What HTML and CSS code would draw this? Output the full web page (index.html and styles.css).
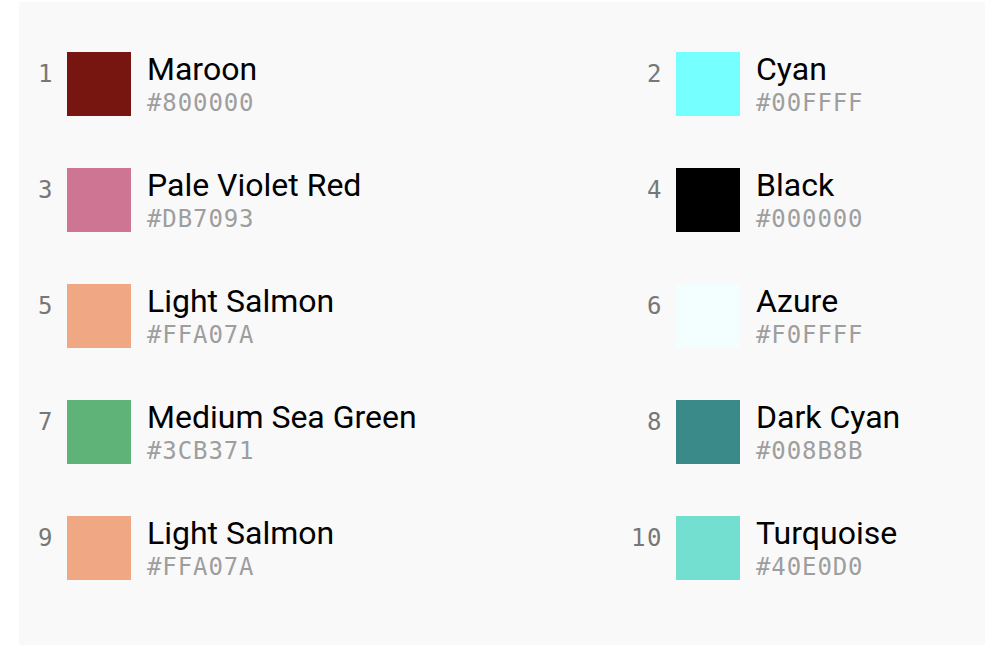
FILE: index.html
```html
<!DOCTYPE html>
<html>
<head>
<meta charset="utf-8">
<link rel="stylesheet" href="styles.css">
</head>
<body>
<div class="panel">
  <ul class="grid">
    <li class="item"><span class="num">1</span><span class="sw" style="background:#771510"></span><div class="info"><div class="name">Maroon</div><div class="hex">#800000</div></div></li>
    <li class="item"><span class="num">2</span><span class="sw" style="background:#75FFFF"></span><div class="info"><div class="name">Cyan</div><div class="hex">#00FFFF</div></div></li>
    <li class="item"><span class="num">3</span><span class="sw" style="background:#CE7593"></span><div class="info"><div class="name">Pale Violet Red</div><div class="hex">#DB7093</div></div></li>
    <li class="item"><span class="num">4</span><span class="sw" style="background:#000000"></span><div class="info"><div class="name">Black</div><div class="hex">#000000</div></div></li>
    <li class="item"><span class="num">5</span><span class="sw" style="background:#F0A784"></span><div class="info"><div class="name">Light Salmon</div><div class="hex">#FFA07A</div></div></li>
    <li class="item"><span class="num">6</span><span class="sw" style="background:#F3FFFF"></span><div class="info"><div class="name">Azure</div><div class="hex">#F0FFFF</div></div></li>
    <li class="item"><span class="num">7</span><span class="sw" style="background:#60B378"></span><div class="info"><div class="name">Medium Sea Green</div><div class="hex">#3CB371</div></div></li>
    <li class="item"><span class="num">8</span><span class="sw" style="background:#3A8A8A"></span><div class="info"><div class="name">Dark Cyan</div><div class="hex">#008B8B</div></div></li>
    <li class="item"><span class="num">9</span><span class="sw" style="background:#F0A784"></span><div class="info"><div class="name">Light Salmon</div><div class="hex">#FFA07A</div></div></li>
    <li class="item"><span class="num">10</span><span class="sw" style="background:#73DFD0"></span><div class="info"><div class="name">Turquoise</div><div class="hex">#40E0D0</div></div></li>
  </ul>
</div>
</body>
</html>
```
FILE: styles.css
```css
html, body {
  margin: 0;
  padding: 0;
  background: #ffffff;
  overflow: hidden;
}
body {
  padding: 2px 0 0 19px;
}
.panel {
  background: #f9f9f9;
  width: 980px;
  height: 643px;
  box-sizing: border-box;
  padding: 50px 0 0 0;
}
.grid {
  list-style: none;
  margin: 0;
  padding: 0;
  display: grid;
  grid-template-columns: 609px 1fr;
  row-gap: 52px;
}
.item {
  display: flex;
  align-items: flex-start;
  height: 64px;
}
.num {
  width: 35px;
  text-align: right;
  font-family: "DejaVu Sans Mono", monospace;
  font-size: 24px;
  letter-spacing: 1.5px;
  color: #777777;
  margin-right: 13px;
  line-height: 24px;
  padding-top: 10px;
}
.sw {
  width: 64px;
  height: 64px;
  flex: none;
}
.info {
  margin-left: 16px;
  display: flex;
  flex-direction: column;
}
.name {
  font-family: Roboto, sans-serif;
  font-size: 32px;
  line-height: 36px;
  margin-top: -1px;
  color: #000;
}
.hex {
  font-family: "DejaVu Sans Mono", monospace;
  font-size: 24px;
  letter-spacing: 0.9px;
  line-height: 28px;
  margin-top: 2px;
  color: #9e9e9e;
}
```
